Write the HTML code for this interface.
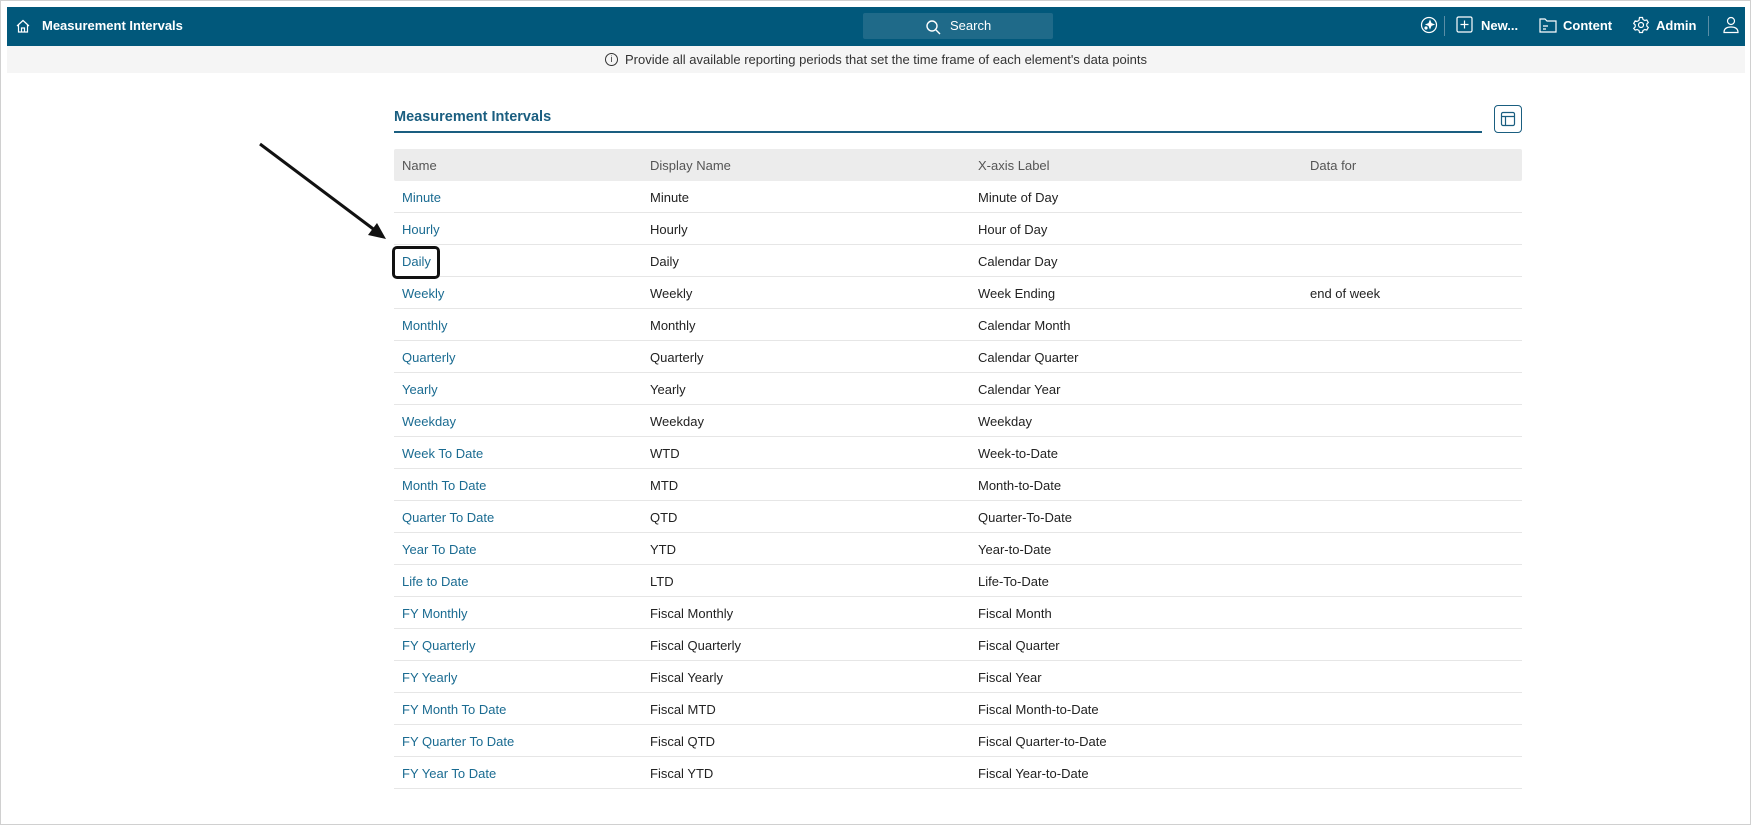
<!DOCTYPE html>
<html><head><meta charset="utf-8"><style>
*{box-sizing:border-box;margin:0;padding:0}
body{width:1751px;height:825px;background:#fff;font-family:"Liberation Sans",sans-serif;position:relative;overflow:hidden;border:1px solid #d0d0d0}
.nav{position:absolute;left:6px;top:6px;width:1738px;height:39px;background:#01587b;color:#fff}
.info{position:absolute;left:6px;top:45px;width:1738px;height:27px;background:#f5f5f5;font-size:13px;color:#333;text-align:center;line-height:27px}
.t{position:absolute;font-size:13px;white-space:nowrap}
.row{position:absolute;left:393px;width:1128px;height:32px;border-bottom:1px solid #e6e6e6;font-size:13px;color:#222}
.row span{position:absolute;top:9px}
.row .a{left:8px;color:#1a6b91}.row .b{left:256px}.row .c{left:584px}.row .d{left:916px}
</style></head><body>
<div class="nav">
<svg style="position:absolute;left:8px;top:11px" width="16" height="16" viewBox="0 0 16 16" fill="none" stroke="#fff" stroke-width="1.2"><path d="M2 8L8 2.5 14 8M3.5 6.8V14h9V6.8M6.5 14V10h3v4"/></svg>
<div class="t" style="left:35px;top:11px;font-weight:bold;font-size:13px">Measurement Intervals</div>
<div style="position:absolute;left:856px;top:6px;width:190px;height:26px;background:#1f6a89;border-radius:2px"></div>
<svg style="position:absolute;left:918px;top:12px" width="16" height="16" viewBox="0 0 16 16" fill="none" stroke="#fff" stroke-width="1.4"><circle cx="7" cy="7" r="5"/><path d="M11 11l4 4"/></svg>
<div class="t" style="left:943px;top:11px">Search</div>
<svg style="position:absolute;left:1413px;top:9px" width="18" height="18" viewBox="0 0 18 18" fill="none" stroke="#fff" stroke-width="1.2"><circle cx="9" cy="9" r="7.5"/><path d="M10 5l1 2.5 2.5 1-2.5 1-1 2.5-1-2.5-2.5-1 2.5-1z" fill="#fff"/><circle cx="6" cy="12" r="1" fill="#fff"/></svg>
<div style="position:absolute;left:1437px;top:9px;width:1px;height:20px;background:#5a8ea6"></div>
<svg style="position:absolute;left:1449px;top:9px" width="17" height="17" viewBox="0 0 17 17" fill="none" stroke="#fff" stroke-width="1.2"><rect x="1" y="1" width="15" height="15" rx="1.5"/><path d="M8.5 4.5v8M4.5 8.5h8"/></svg>
<div class="t" style="left:1474px;top:11px;font-weight:bold">New...</div>
<svg style="position:absolute;left:1532px;top:10px" width="18" height="16" viewBox="0 0 18 16" fill="none" stroke="#fff" stroke-width="1.2"><path d="M1 2h5l2 2h9v11H1z"/><path d="M4 9h5M4 12h3"/></svg>
<div class="t" style="left:1556px;top:11px;font-weight:bold">Content</div>
<svg style="position:absolute;left:1625px;top:9px" width="18" height="18" viewBox="0 0 18 18" fill="none" stroke="#fff" stroke-width="1.2"><circle cx="9" cy="9" r="2.5"/><path d="M7.5 1.5h3l.5 2 1.8 1 2-.6 1.5 2.6-1.5 1.5v2l1.5 1.5-1.5 2.6-2-.6-1.8 1-.5 2h-3l-.5-2-1.8-1-2 .6L1.7 12.4l1.5-1.5v-2L1.7 7.4l1.5-2.6 2 .6 1.8-1z"/></svg>
<div class="t" style="left:1649px;top:11px;font-weight:bold">Admin</div>
<div style="position:absolute;left:1701px;top:9px;width:1px;height:20px;background:#5a8ea6"></div>
<svg style="position:absolute;left:1716px;top:9px" width="16" height="18" viewBox="0 0 16 18" fill="none" stroke="#fff" stroke-width="1.2"><circle cx="8" cy="5" r="3.5"/><path d="M1 16.5c0-4 3-5.5 7-5.5s7 1.5 7 5.5z"/></svg>
</div>
<div class="info"><span style="display:inline-block;width:13px;height:13px;border:1.2px solid #333;border-radius:50%;font-size:9px;line-height:11px;vertical-align:middle;margin-right:7px;position:relative;top:-1px">i</span>Provide all available reporting periods that set the time frame of each element's data points</div>
<div class="t" style="left:393px;top:108px;font-size:14.5px;font-weight:bold;color:#1a5e80">Measurement Intervals</div>
<div style="position:absolute;left:393px;top:130px;width:1088px;height:1.5px;background:#1a5e80"></div>
<div style="position:absolute;left:1493px;top:104px;width:28px;height:28px;border:1px solid #1a5e80;border-radius:4px"></div>
<svg style="position:absolute;left:1499px;top:110px" width="16" height="16" viewBox="0 0 16 16" fill="none" stroke="#1a5e80" stroke-width="1.2"><rect x="1.5" y="1.5" width="13" height="13" rx="1.5"/><path d="M1.5 5.5h13M5.5 5.5v9"/></svg>
<div style="position:absolute;left:393px;top:148px;width:1128px;height:32px;background:#ececec;border-radius:2px;font-size:13px;color:#555">
<span style="position:absolute;left:8px;top:9px">Name</span><span style="position:absolute;left:256px;top:9px">Display Name</span><span style="position:absolute;left:584px;top:9px">X-axis Label</span><span style="position:absolute;left:916px;top:9px">Data for</span></div>
<div class="row" style="top:180px"><span class="a">Minute</span><span class="b">Minute</span><span class="c">Minute of Day</span></div>
<div class="row" style="top:212px"><span class="a">Hourly</span><span class="b">Hourly</span><span class="c">Hour of Day</span></div>
<div class="row" style="top:244px"><span class="a">Daily</span><span class="b">Daily</span><span class="c">Calendar Day</span></div>
<div class="row" style="top:276px"><span class="a">Weekly</span><span class="b">Weekly</span><span class="c">Week Ending</span><span class="d">end of week</span></div>
<div class="row" style="top:308px"><span class="a">Monthly</span><span class="b">Monthly</span><span class="c">Calendar Month</span></div>
<div class="row" style="top:340px"><span class="a">Quarterly</span><span class="b">Quarterly</span><span class="c">Calendar Quarter</span></div>
<div class="row" style="top:372px"><span class="a">Yearly</span><span class="b">Yearly</span><span class="c">Calendar Year</span></div>
<div class="row" style="top:404px"><span class="a">Weekday</span><span class="b">Weekday</span><span class="c">Weekday</span></div>
<div class="row" style="top:436px"><span class="a">Week To Date</span><span class="b">WTD</span><span class="c">Week-to-Date</span></div>
<div class="row" style="top:468px"><span class="a">Month To Date</span><span class="b">MTD</span><span class="c">Month-to-Date</span></div>
<div class="row" style="top:500px"><span class="a">Quarter To Date</span><span class="b">QTD</span><span class="c">Quarter-To-Date</span></div>
<div class="row" style="top:532px"><span class="a">Year To Date</span><span class="b">YTD</span><span class="c">Year-to-Date</span></div>
<div class="row" style="top:564px"><span class="a">Life to Date</span><span class="b">LTD</span><span class="c">Life-To-Date</span></div>
<div class="row" style="top:596px"><span class="a">FY Monthly</span><span class="b">Fiscal Monthly</span><span class="c">Fiscal Month</span></div>
<div class="row" style="top:628px"><span class="a">FY Quarterly</span><span class="b">Fiscal Quarterly</span><span class="c">Fiscal Quarter</span></div>
<div class="row" style="top:660px"><span class="a">FY Yearly</span><span class="b">Fiscal Yearly</span><span class="c">Fiscal Year</span></div>
<div class="row" style="top:692px"><span class="a">FY Month To Date</span><span class="b">Fiscal MTD</span><span class="c">Fiscal Month-to-Date</span></div>
<div class="row" style="top:724px"><span class="a">FY Quarter To Date</span><span class="b">Fiscal QTD</span><span class="c">Fiscal Quarter-to-Date</span></div>
<div class="row" style="top:756px"><span class="a">FY Year To Date</span><span class="b">Fiscal YTD</span><span class="c">Fiscal Year-to-Date</span></div>
<div style="position:absolute;left:391px;top:245px;width:48px;height:33px;border:3px solid #111;border-radius:5px"></div>
<svg style="position:absolute;left:0;top:0" width="500" height="300"><line x1="259" y1="143" x2="375" y2="230" stroke="#111" stroke-width="3"/><path d="M385 238L367 234 376 222z" fill="#111"/></svg>
</body></html>
